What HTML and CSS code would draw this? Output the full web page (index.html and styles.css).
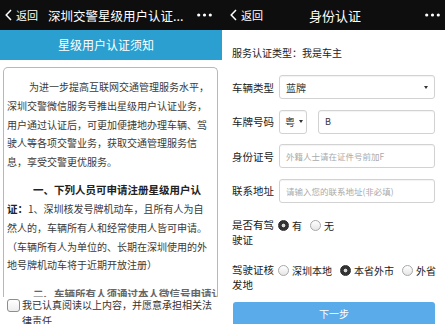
FILE: index.html
```html
<!DOCTYPE html>
<html lang="zh-CN">
<head>
<meta charset="utf-8">
<title>星级用户认证</title>
<link rel="stylesheet" href="styles.css">
</head>
<body>
<section class="pane pane-left">
  <header class="topbar topbar-left">
    <span class="back">
      <svg class="chev" width="7" height="12" viewBox="0 0 7 12"><path d="M6 1 L1.2 6 L6 11" fill="none" stroke="#fff" stroke-width="1.5"/></svg>
      <span>返回</span>
    </span>
    <span class="title-left">深圳交警星级用户认证...</span>
    <svg class="dots" width="15" height="4" viewBox="0 0 15 4"><circle cx="1.7" cy="2" r="1.6" fill="#fff"/><circle cx="7.5" cy="2" r="1.6" fill="#fff"/><circle cx="13.3" cy="2" r="1.6" fill="#fff"/></svg>
  </header>
  <div class="bluebar">星级用户认证须知</div>
  <div class="notice">
    <p class="p1">为进一步提高互联网交通管理服务水平，<br>深圳交警微信服务号推出星级用户认证业务，<br>用户通过认证后，可更加便捷地办理车辆、驾<br>驶人等各项交警业务，获取交通管理服务信<br>息，享受交警更优服务。</p>
    <p class="p2"><b>一、下列人员可申请注册星级用户认<br>证：</b>1、深圳核发号牌机动车，且所有人为自<br>然人的，车辆所有人和经常使用人皆可申请。<br>（车辆所有人为单位的、长期在深圳使用的外<br>地号牌机动车将于近期开放注册）</p>
    <p class="p2 p3"><b>二、车辆所有人须通过本人微信号申请认证</b></p>
  </div>
  <label class="agree">
    <span class="checkbox"></span>
    <span class="agree-text">我已认真阅读以上内容，并愿意承担相关法<br>律责任</span>
  </label>
</section>

<section class="pane pane-right">
  <header class="topbar topbar-right">
    <span class="back">
      <svg class="chev" width="7" height="12" viewBox="0 0 7 12"><path d="M6 1 L1.2 6 L6 11" fill="none" stroke="#fff" stroke-width="1.5"/></svg>
      <span>返回</span>
    </span>
    <span class="title-right">身份认证</span>
    <svg class="dots dots-right" width="15" height="4" viewBox="0 0 15 4"><circle cx="1.7" cy="2" r="1.6" fill="#fff"/><circle cx="7.5" cy="2" r="1.6" fill="#fff"/><circle cx="13.3" cy="2" r="1.6" fill="#fff"/></svg>
  </header>
  <div class="form">
    <div class="service">服务认证类型：我是车主</div>
    <div class="rows">
      <div class="row">
        <span class="label">车辆类型</span>
        <div class="box select wide"><span>蓝牌</span><i class="caret"></i></div>
      </div>
      <div class="row">
        <span class="label">车牌号码</span>
        <div class="box select prov"><span>粤</span><i class="caret"></i></div>
        <div class="box plate"><span>B</span></div>
      </div>
      <div class="row">
        <span class="label">身份证号</span>
        <div class="box wide"><span class="ph">外籍人士请在证件号前加F</span></div>
      </div>
      <div class="row">
        <span class="label">联系地址</span>
        <div class="box wide"><span class="ph">请输入您的联系地址(非必填)</span></div>
      </div>
    </div>
    <div class="radio-row first">
      <span class="label multi">是否有驾驶证</span>
      <div class="options">
        <span class="opt"><i class="radio on"></i>有</span>
        <span class="opt"><i class="radio"></i>无</span>
      </div>
    </div>
    <div class="radio-row">
      <span class="label multi">驾驶证核发地</span>
      <div class="options">
        <span class="opt"><i class="radio"></i>深圳本地</span>
        <span class="opt"><i class="radio on"></i>本省外市</span>
        <span class="opt"><i class="radio"></i>外省</span>
      </div>
    </div>
    <div class="next">下一步</div>
  </div>
</section>
</body>
</html>
```
FILE: styles.css
```css
html, body {
  margin: 0;
  padding: 0;
}
body {
  width: 445px;
  height: 324px;
  overflow: hidden;
  display: flex;
  background: #fff;
  font-family: "Noto Sans CJK SC", "Noto Sans", sans-serif;
  color: #333;
}
.pane {
  flex: none;
  display: flex;
  flex-direction: column;
  height: 324px;
  overflow: hidden;
}
.pane-left { width: 222px; }
.pane-right { width: 223px; }

.topbar {
  height: 30px;
  flex: none;
  background: #0e0e0e;
  color: #fff;
  display: flex;
  align-items: center;
}
.topbar-left { padding-left: 5px; }
.back {
  display: flex;
  align-items: center;
  gap: 4px;
  font-size: 11px;
  line-height: 14px;
}
.chev { display: block; }
.title-left {
  margin-left: 10px;
  font-size: 12.5px;
  white-space: nowrap;
}
.dots {
  margin-left: auto;
  margin-right: 10px;
  display: block;
}
.topbar-right {
  display: grid;
  grid-template-columns: 1fr auto 1fr;
  padding: 0 5px 0 8px;
}
.title-right {
  font-size: 13px;
}
.dots-right {
  justify-self: end;
  margin-right: 0;
}

.bluebar {
  height: 30px;
  flex: none;
  background: #2a9fd0;
  color: #fff;
  font-size: 12px;
  line-height: 30px;
  text-align: center;
  padding-right: 10px;
}

.notice {
  flex: none;
  box-sizing: border-box;
  height: 230px;
  margin: 7px 4px 0 3px;
  padding: 10px 4px 0 3px;
  border: 1px solid #b8b8b8;
  border-bottom: none;
  border-radius: 5px 5px 0 0;
  overflow: hidden;
  font-size: 10px;
  line-height: 18.8px;
  white-space: nowrap;
  color: #3a3a3a;
}
.notice p { margin: 0; }
.notice .p1 { text-indent: 22px; }
.notice .p2 { margin-top: 9.3px; text-indent: 26px; }
.notice .p3 { line-height: 12px; margin-top: 13px; color: #777; }
.notice b { font-size: 10.5px; font-weight: bold; color: #222; }
.notice .p3 b { color: #666; }

.agree {
  display: flex;
  align-items: flex-start;
  padding-left: 7px;
  gap: 2px;
  font-size: 10px;
  line-height: 16px;
  color: #333;
}
.checkbox {
  flex: none;
  width: 13px;
  height: 13px;
  box-sizing: border-box;
  margin-top: 1.5px;
  border: 1px solid #8d8d8d;
  border-radius: 3px;
  background: linear-gradient(#fff, #eee);
}
.agree-text { white-space: nowrap; }

.form {
  padding: 0 10px;
  font-size: 10.5px;
  color: #222;
}
.service {
  margin-top: 15px;
  line-height: 16px;
  font-size: 10px;
}
.rows {
  margin-top: 14px;
  display: flex;
  flex-direction: column;
  gap: 10.5px;
}
.row {
  display: flex;
  align-items: center;
}
.label {
  flex: none;
  width: 47px;
  white-space: nowrap;
}
.box {
  box-sizing: border-box;
  height: 24px;
  border: 1px solid #d2d2d2;
  border-radius: 3px;
  background: #fff;
  box-shadow: inset 0 1px 1px rgba(0,0,0,0.05);
  display: flex;
  align-items: center;
  padding: 0 6px;
  font-size: 10px;
  color: #333;
}
.wide { width: 156px; }
.prov { width: 28px; padding: 0 4px 0 5px; gap: 4px; }
.plate { width: 117px; margin-left: 11px; font-size: 9px; }
.select { justify-content: space-between; }
.caret {
  display: block;
  width: 0;
  height: 0;
  border-left: 2.5px solid transparent;
  border-right: 2.5px solid transparent;
  border-top: 3px solid #333;
}
.ph {
  color: #aaa;
  font-size: 8.5px;
  white-space: nowrap;
}

.radio-row {
  display: flex;
  align-items: flex-start;
  margin-top: 15px;
}
.radio-row.first { margin-top: 14px; }
.label.multi {
  width: 46px;
  white-space: normal;
  line-height: 15px;
}
.options {
  display: flex;
  gap: 8px;
  padding-top: 1px;
  font-size: 10px;
  line-height: 15px;
  white-space: nowrap;
}
.opt {
  display: flex;
  align-items: center;
  gap: 3px;
}
.radio {
  display: block;
  flex: none;
  width: 11px;
  height: 11px;
  box-sizing: border-box;
  border-radius: 50%;
  border: 1px solid #a8a8a8;
  background: linear-gradient(#fff, #e6e6e6);
}
.radio.on {
  border-color: #2e2e2e;
  background: radial-gradient(circle, #d8d8d8 0 1.6px, #333 2.2px);
}

.next {
  margin: 10.5px 0 0 1px;
  height: 25px;
  border-radius: 3px;
  background: #5aabea;
  color: #fff;
  font-size: 10px;
  line-height: 24px;
  text-align: center;
}
```
